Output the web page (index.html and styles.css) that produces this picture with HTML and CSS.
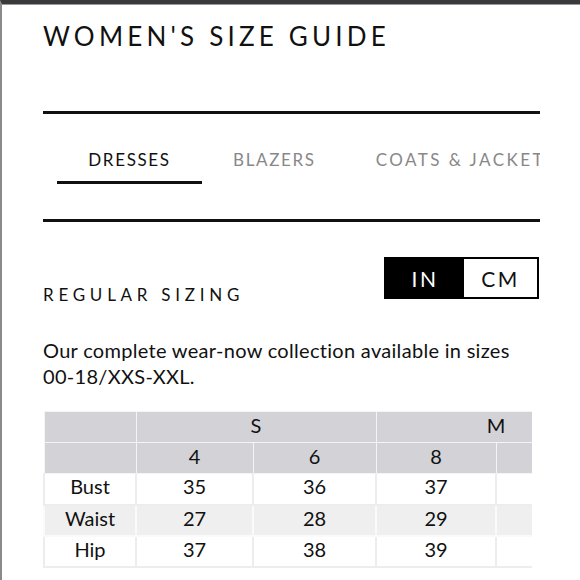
FILE: index.html
```html
<!DOCTYPE html>
<html>
<head>
<meta charset="utf-8">
<link rel="stylesheet" href="styles.css">
</head>
<body>
<div class="frame">
  <div class="page">
    <h1 class="title">WOMEN'S SIZE GUIDE</h1>
    <div class="rule rule-top"></div>
    <nav class="tabs">
      <div class="tab active">DRESSES</div>
      <div class="tab">BLAZERS</div>
      <div class="tab">COATS &amp; JACKETS</div>
    </nav>
    <div class="rule rule-bottom"></div>
    <div class="sizing-head">
      <h2 class="sizing-title">REGULAR SIZING</h2>
      <div class="toggle">
        <span class="opt on">IN</span>
        <span class="opt">CM</span>
      </div>
    </div>
    <p class="desc">Our complete wear-now collection available in sizes 00-18/XXS-XXL.</p>
    <div class="table-wrap">
      <table class="sizes">
        <colgroup>
          <col class="c0"><col class="c1"><col class="c2"><col class="c3"><col class="c4">
        </colgroup>
        <thead>
          <tr class="h1">
            <th></th><th colspan="2">S</th><th colspan="2">M</th>
          </tr>
          <tr class="h2">
            <th></th><th>4</th><th>6</th><th>8</th><th>10</th>
          </tr>
        </thead>
        <tbody>
          <tr><td>Bust</td><td>35</td><td>36</td><td>37</td><td>38</td></tr>
          <tr class="alt"><td>Waist</td><td>27</td><td>28</td><td>29</td><td>30</td></tr>
          <tr><td>Hip</td><td>37</td><td>38</td><td>39</td><td>40</td></tr>
        </tbody>
      </table>
    </div>
  </div>
</div>
</body>
</html>
```

FILE: styles.css
```css
* { box-sizing: border-box; }
html, body { margin: 0; padding: 0; background: #fff; }
body {
  font-family: Lato, "Open Sans", sans-serif;
  color: #111;
  width: 580px;
  height: 580px;
  overflow: hidden;
}
.frame {
  border-top: 4px solid #3a3a3c;
  border-left: 2px solid #8a8a8a;
  box-shadow: inset 0 1px 0 #9a9a9a;
  height: 580px;
}
.page {
  padding: 0 40px 0 41px;
}
.title {
  margin: 0;
  padding-top: 16px;
  font-size: 26px;
  font-weight: 400;
  letter-spacing: 4.2px;
  line-height: 32px;
  color: #111;
}
.rule {
  height: 3px;
  background: #111;
}
.rule-top { margin-top: 59px; }
.tabs {
  display: flex;
  height: 105px;
  padding-top: 33px;
  overflow: hidden;
  white-space: nowrap;
}
.tab {
  flex-shrink: 0;
  font-size: 17px;
  letter-spacing: 1.65px;
  color: #888;
  height: 37px;
  line-height: 26px;
}
.tab.active {
  color: #111;
  width: 145px;
  margin-left: 14px;
  text-align: center;
  border-bottom: 3px solid #111;
}
.tab:nth-child(2) { margin-left: 31px; }
.tab:nth-child(3) { margin-left: 60px; letter-spacing: 2.45px; }
.sizing-head {
  display: flex;
  justify-content: space-between;
  align-items: flex-end;
  margin-top: 35px;
}
.sizing-title {
  margin: 0 0 -7px 0;
  font-size: 17px;
  font-weight: 400;
  letter-spacing: 4.75px;
  line-height: 22px;
}
.toggle {
  display: flex;
  border: 2px solid #000;
  height: 42px;
  width: 155px;
  margin-right: 1px;
}
.opt {
  flex: 1;
  display: flex;
  align-items: center;
  justify-content: center;
  font-size: 21px;
  letter-spacing: 2.5px;
  color: #111;
}
.opt.on {
  background: #000;
  color: #fff;
  flex: 0 0 78px;
}
.desc {
  margin: 38px 0 0 0;
  font-size: 20px;
  letter-spacing: 0.3px;
  line-height: 26px;
  color: #111;
  width: 490px;
}
.table-wrap {
  margin-top: 22px;
  width: 489px;
  overflow: hidden;
}
.sizes {
  border-collapse: collapse;
  table-layout: fixed;
  width: 572px;
  font-size: 20px;
  color: #111;
}
.c0 { width: 92px; }
.c1 { width: 117px; }
.c2 { width: 123px; }
.c3 { width: 120px; }
.c4 { width: 120px; }
.sizes th, .sizes td {
  height: 31px;
  padding: 0 0 5px 0;
  text-align: center;
  font-weight: 400;
  line-height: 24px;
}
.sizes th {
  background: #d3d3d7;
  border: 1px solid #f4f4f6;
}
.sizes td {
  background: #fff;
  border: 2px solid #ededed;
}
.sizes tr.alt td {
  background: #efefef;
  border-color: #fafafa;
}
.sizes tbody tr:first-child td { border-top: 0; }
```
